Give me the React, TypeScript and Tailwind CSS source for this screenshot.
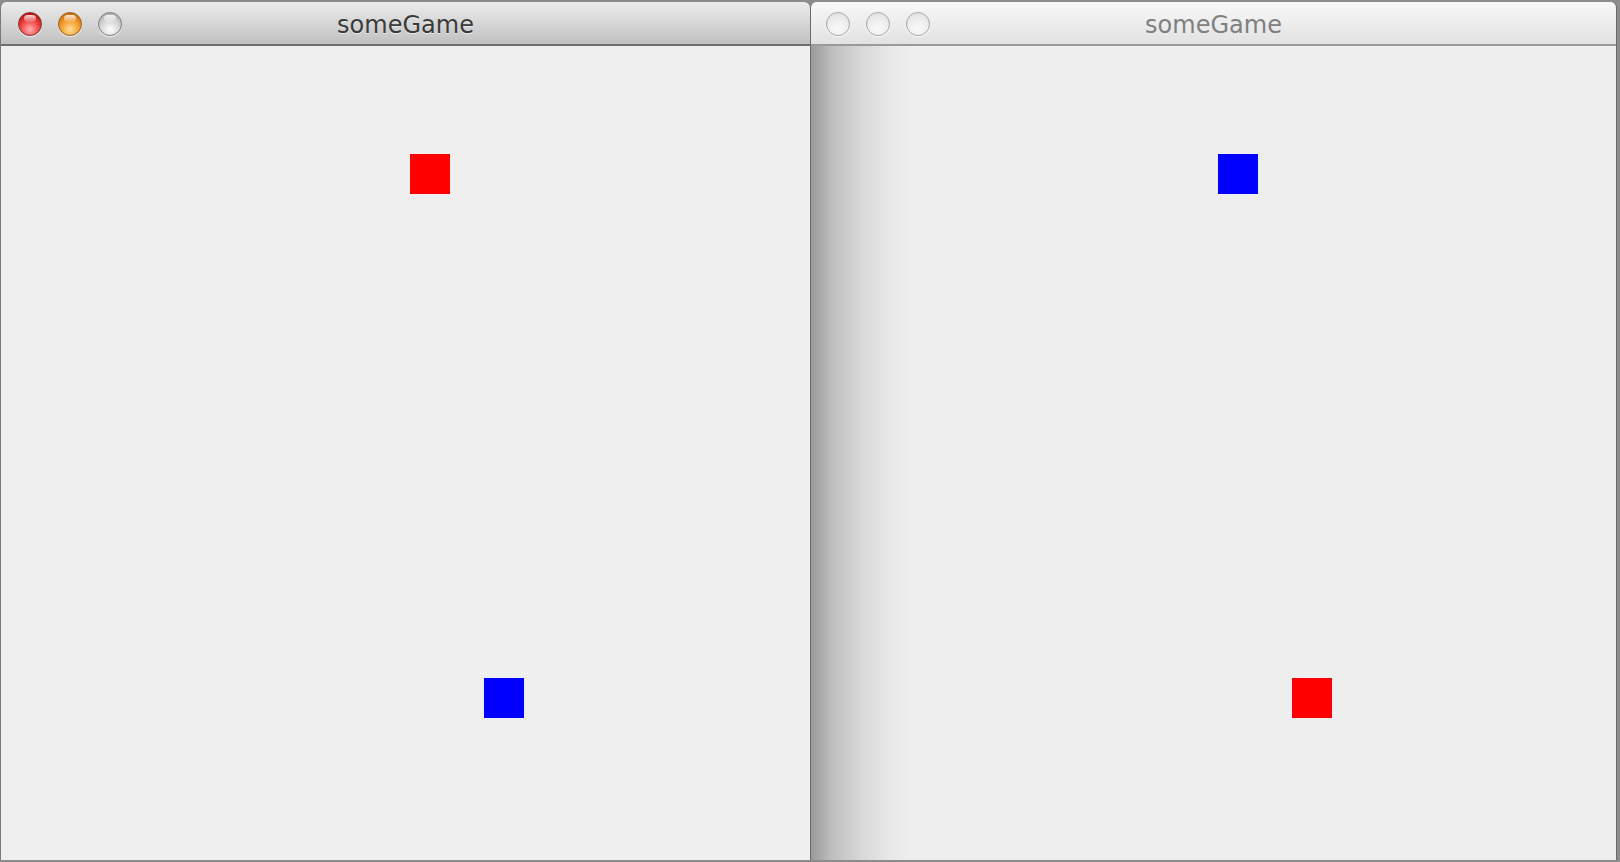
import React from "react";

function Light({ kind }: { kind: "red" | "orange" | "gray" | "off" }) {
  const cls =
    kind === "red"
      ? "bg-[radial-gradient(circle_at_50%_75%,#ffb0b0_0%,#f04848_45%,#c01010_80%,#8a0a0a_100%)] border-[#8a3030]"
      : kind === "orange"
      ? "bg-[radial-gradient(circle_at_50%_75%,#ffe0a0_0%,#f5a030_45%,#d07010_80%,#9a5008_100%)] border-[#9a6020]"
      : kind === "gray"
      ? "bg-[radial-gradient(circle_at_50%_75%,#ffffff_0%,#d8d8d8_45%,#a8a8a8_85%,#888888_100%)] border-[#808080]"
      : "bg-[radial-gradient(circle_at_50%_75%,#fafafa_0%,#eeeeee_50%,#dcdcdc_100%)] border-[#a8a8a8]";
  return (
    <div className={`relative w-[24px] h-[24px] rounded-full border ${cls} shadow-[0_1px_1px_rgba(255,255,255,0.8)]`}>
      {kind !== "off" && (
        <div className="absolute left-[5px] top-[2px] w-[12px] h-[7px] rounded-full bg-[linear-gradient(to_bottom,rgba(255,255,255,0.85),rgba(255,255,255,0.1))]" />
      )}
    </div>
  );
}

function Square({ color, x, y }: { color: "red" | "blue"; x: number; y: number }) {
  return (
    <div
      className={`absolute w-[40px] h-[40px] ${color === "red" ? "bg-[#ff0000]" : "bg-[#0000ff]"}`}
      style={{ left: x, top: y }}
    />
  );
}

export default function App() {
  return (
    <div
      className="w-[1620px] h-[862px] bg-[#8c8c8c] flex overflow-hidden"
      style={{ fontFamily: '"DejaVu Sans", "Liberation Sans", sans-serif' }}
    >
      {/* Left (active) window */}
      <div className="w-[810px] h-[858px] mt-[2px] flex flex-col rounded-t-[6px] border-l border-[#7a7a7a] overflow-hidden">
        <div className="relative h-[44px] shrink-0 bg-[linear-gradient(to_bottom,#ececec,#d6d6d6_50%,#c0c0c0)] border-b-2 border-[#6e6e6e] flex items-center">
          <div className="flex items-center gap-[16px] pl-[17px] pt-[1px]">
            <Light kind="red" />
            <Light kind="orange" />
            <Light kind="gray" />
          </div>
          <div className="absolute inset-0 flex items-center justify-center text-[24px] text-[#3a3a3a] pt-[3px] [text-shadow:0_1px_0_rgba(255,255,255,0.6)]">
            someGame
          </div>
        </div>
        <div className="relative flex-1 bg-[#efefef]">
          <Square color="red" x={409} y={108} />
          <Square color="blue" x={483} y={632} />
        </div>
      </div>

      {/* Right (inactive) window */}
      <div className="w-[807px] h-[858px] mt-[2px] flex flex-col rounded-t-[6px] border-l border-r border-[#6a6a6a] overflow-hidden">
        <div className="relative h-[44px] shrink-0 bg-[linear-gradient(to_bottom,#f8f8f8,#ededed_50%,#e2e2e2)] border-b-2 border-[#9a9a9a] flex items-center">
          <div className="flex items-center gap-[16px] pl-[15px] pt-[1px]">
            <Light kind="off" />
            <Light kind="off" />
            <Light kind="off" />
          </div>
          <div className="absolute inset-0 flex items-center justify-center text-[24px] text-[#808080] pt-[3px]">
            someGame
          </div>
        </div>
        <div className="relative flex-1 bg-[#eeeeee]">
          <div className="absolute left-0 top-0 bottom-0 w-[100px] bg-[linear-gradient(to_right,#9a9a9a_0%,#bdbdbd_20%,#d8d8d8_50%,#e8e8e8_80%,#eeeeee_100%)]" />
          <Square color="blue" x={407} y={108} />
          <Square color="red" x={481} y={632} />
        </div>
      </div>
    </div>
  );
}
